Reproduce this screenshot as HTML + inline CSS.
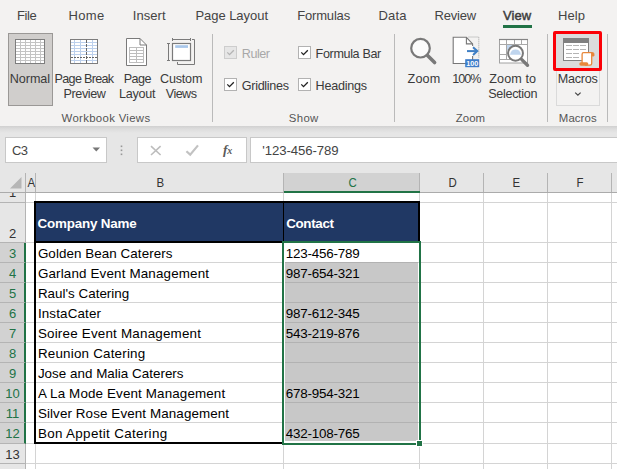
<!DOCTYPE html>
<html>
<head>
<meta charset="utf-8">
<title>Excel</title>
<style>
html,body{margin:0;padding:0;}
body{width:617px;height:469px;overflow:hidden;background:#fff;font-family:"Liberation Sans",sans-serif;color:#262626;position:relative;}
.abs{position:absolute;}
#ribbon{left:0;top:0;width:617px;height:126px;background:#f3f2f1;}
#shadow{left:0;top:126px;width:617px;height:7px;background:linear-gradient(#d0d0d0,#dcdcdc 40%,#e6e6e6);}
#fbar{left:0;top:133px;width:617px;height:42px;background:#e6e6e6;}
.t{position:absolute;white-space:nowrap;line-height:20px;height:20px;}
.tab{color:#444;}
.lbl{color:#3a3a3a;}
.grp{color:#555;}
.cbl{color:#3a3a3a;}
.sep{position:absolute;top:34px;width:1px;height:88px;background:#bababa;}
.cb{position:absolute;width:13px;height:13px;border:1px solid #b2b2b2;background:#fff;box-sizing:border-box;}
.cb.dis{border-color:#cdcdcd;background:#e6e6e6;}
.colh{position:absolute;top:173px;height:19px;border-right:1px solid #b4b4b4;box-sizing:border-box;}
.rowh{position:absolute;left:0;width:26px;background:#e6e6e6;border-bottom:1px solid #b4b4b4;border-right:1px solid #b4b4b4;box-sizing:border-box;overflow:hidden;}
.rowh.sel{background:#d2d2d2;border-right:2px solid #217346;}
.rowh span{position:absolute;left:0;width:25px;text-align:center;font-size:13px;line-height:20px;color:#333;}
.rowh.sel span{color:#217346;}
.vl{position:absolute;top:193px;width:1px;height:276px;background:#d4d4d4;}
.hl{position:absolute;left:26px;height:1px;width:591px;background:#d4d4d4;}
.cell{color:#000;}
.colt{transform:scaleX(0.88);}
.hd{color:#fff;font-weight:bold;}
svg{position:absolute;overflow:visible;}
</style>
</head>
<body>
<div id="ribbon" class="abs"></div>
<div id="shadow" class="abs"></div>
<div id="fbar" class="abs"></div>
<div class="abs" style="left:503px;top:25px;width:29px;height:3px;background:#217346"></div>
<div class="abs" style="left:8px;top:33px;width:45px;height:73px;background:#d0cecc;border:1px solid #9a9896;box-sizing:border-box"></div>
<!-- Normal icon -->
<svg width="30" height="25" viewBox="0 0 30 25" style="left:15px;top:39px" shape-rendering="crispEdges">
<rect x="0.5" y="0.5" width="29" height="24" fill="#fff" stroke="#7d7d7d"/>
<path d="M5.5 1V24M10.5 1V24M15.5 1V24M20.5 1V24M25.5 1V24M1 3.5H29M1 6.5H29M1 9.5H29M1 12.5H29M1 15.5H29M1 18.5H29M1 21.5H29" stroke="#c4c4c4" fill="none"/>
</svg>
<!-- Page Break Preview icon -->
<svg width="28" height="25" viewBox="0 0 28 25" style="left:70px;top:39px" shape-rendering="crispEdges">
<rect x="0.5" y="0.5" width="27" height="24" fill="#fff" stroke="#7d7d7d"/>
<path d="M4.5 1V24M10.5 1V24M22.5 1V24M1 3.5H27M1 6.5H27M1 9.5H27M1 12.5H27M1 15.5H27M1 21.5H27" stroke="#bcd0ec" fill="none"/>
<path d="M16.5 1V24" stroke="#666" stroke-dasharray="3 1" fill="none"/>
<path d="M1 18.5H27" stroke="#666" stroke-dasharray="2 1" fill="none"/>
</svg>
<!-- Page Layout icon -->
<svg width="22" height="29" viewBox="0 0 22 29" style="left:126px;top:38px">
<path d="M0.5 0.5H14L20.5 7V27.5H0.5Z" fill="#fff" stroke="#7a7a7a" stroke-width="1"/>
<path d="M14 0.5V7H20.5" fill="none" stroke="#7a7a7a" stroke-width="1"/>
<g shape-rendering="crispEdges"><rect x="3.5" y="9.5" width="14" height="15" fill="#fff" stroke="#bdbdbd"/>
<path d="M10.5 10V24M4 12.5H17M4 15.5H17M4 18.5H17M4 21.5H17" stroke="#bdbdbd" fill="none"/></g>
</svg>
<!-- Custom Views icon -->
<svg width="30" height="28" viewBox="0 0 30 28" style="left:166px;top:37px">
<g fill="none" stroke="#7a7a7a" stroke-width="1">
<path d="M26 2.5H28.5V27.5H11.5V25"/>
<path d="M6.2 2.5H24.8M6.5 1V4M24.5 1V4"/>
<path d="M2.5 6.2V23.8M1 6.5H4M1 23.5H4"/>
<rect x="6.5" y="6.5" width="18" height="17" fill="#fff" stroke-width="1.2"/>
</g>
<rect x="9.2" y="8.2" width="12.8" height="2.7" fill="#a9c7ea"/>
</svg>
<!-- Zoom icon -->
<svg width="30" height="30" viewBox="0 0 30 30" style="left:408px;top:36px">
<circle cx="12.5" cy="12.2" r="9.3" fill="#fbfbfb" stroke="#797979" stroke-width="2.2"/>
<path d="M19.3 19.3L26.6 26.6" stroke="#797979" stroke-width="3.6" stroke-linecap="round"/>
</svg>
<!-- 100% icon -->
<svg width="30" height="32" viewBox="0 0 30 32" style="left:452px;top:36px">
<path d="M1.2 1.3H14.4L20.6 7.9V27.5H1.2Z" fill="#fff" stroke="#777" stroke-width="1.1"/>
<path d="M14.4 1.3V7.9H20.6" fill="none" stroke="#777" stroke-width="1.1"/>
<path d="M16.5 1H26.8V21.5" fill="none" stroke="#999" stroke-width="0.9" stroke-dasharray="1 1"/>
<rect x="19.6" y="10" width="2" height="10" fill="#fff"/>
<path d="M15 15.1H25" stroke="#3f7fc4" stroke-width="2" fill="none"/>
<path d="M21 11.2L25.3 15.1L21 19" stroke="#3f7fc4" stroke-width="2" fill="none"/>
<rect x="13.2" y="23.2" width="14" height="8" fill="#3d7cc9"/>
<text x="20.2" y="30" text-anchor="middle" font-family="Liberation Sans, sans-serif" font-size="7.2" font-weight="bold" fill="#fff">100</text>
</svg>
<!-- Zoom to Selection icon -->
<svg width="32" height="30" viewBox="0 0 32 30" style="left:498px;top:38px">
<rect x="1.5" y="1.5" width="28" height="23.5" fill="#fff" stroke="#a2a2a2" stroke-width="1"/>
<path d="M1 1.5H30" stroke="#858585" stroke-width="1.2" fill="none"/>
<path d="M8.5 2V21M16.5 2V7M23.5 2V7M2 6.5H29M2 16.5H9M2 21.5H13" stroke="#a8a8a8" stroke-width="1" fill="none"/>
<rect x="9" y="7" width="7" height="5" fill="#bfd5ee"/>
<circle cx="17.5" cy="15.2" r="7.45" fill="#fff" stroke="#797979" stroke-width="2"/>
<path d="M12 16.8A5.6 6.6 0 0 1 23 16.8Z" fill="#bfd5ee"/>
<path d="M23.8 21.6L29.5 27.2" stroke="#797979" stroke-width="3.4" stroke-linecap="round"/>
</svg>

<div class="sep" style="left:212px"></div>
<div class="sep" style="left:394px"></div>
<div class="sep" style="left:547px"></div>
<div class="sep" style="left:607px"></div>
<div class="cb dis" style="left:224px;top:46px"><svg width="11" height="11" viewBox="0 0 11 11" style="left:0;top:0"><path d="M2.3 5.4 L4.5 7.6 L8.8 3.2" fill="none" stroke="#b4b4b4" stroke-width="1.3"/></svg></div>
<div class="cb" style="left:224px;top:78px"><svg width="11" height="11" viewBox="0 0 11 11" style="left:0;top:0"><path d="M2.3 5.4 L4.5 7.6 L8.8 3.2" fill="none" stroke="#222" stroke-width="1.3"/></svg></div>
<div class="cb" style="left:298px;top:46px"><svg width="11" height="11" viewBox="0 0 11 11" style="left:0;top:0"><path d="M2.3 5.4 L4.5 7.6 L8.8 3.2" fill="none" stroke="#222" stroke-width="1.3"/></svg></div>
<div class="cb" style="left:298px;top:78px"><svg width="11" height="11" viewBox="0 0 11 11" style="left:0;top:0"><path d="M2.3 5.4 L4.5 7.6 L8.8 3.2" fill="none" stroke="#222" stroke-width="1.3"/></svg></div>
<div class="abs" style="left:556px;top:68px;width:44px;height:38px;border:1px solid #dadada;box-sizing:border-box"></div>
<div class="abs" style="left:553px;top:31px;width:49px;height:40px;border:3px solid #fb0007;border-radius:2px;box-sizing:border-box;background:#dcdcdc"></div>
<div class="abs" style="left:5px;top:137px;width:102px;height:26px;background:#fff;border:1px solid #c8c8c8;box-sizing:border-box"></div>
<div class="abs" style="left:137px;top:137px;width:110px;height:26px;background:#fff;border:1px solid #c8c8c8;box-sizing:border-box"></div>
<div class="abs" style="left:250px;top:137px;width:370px;height:26px;background:#fff;border:1px solid #c8c8c8;box-sizing:border-box"></div>
<!-- Macros icon -->
<svg width="34" height="30" viewBox="0 0 34 30" style="left:562px;top:37px">
<g shape-rendering="crispEdges"><rect x="1.5" y="1.5" width="25" height="22" fill="#fff" stroke="#808080"/>
<rect x="1" y="1" width="26" height="5" fill="#808080"/>
<path d="M4 8.5H10M11 8.5H17M18 8.5H24M4 12.5H10M11 12.5H17M18 12.5H24M4 16.5H10M11 16.5H17M4 20.5H10M11 20.5H17" stroke="#b4b4b4" fill="none"/></g>
<path d="M29.6 15.6H30.6Q32 15.6 32 17V19H29.6Z" fill="#e8873a" stroke="#e8873a" stroke-width="0.8" stroke-linejoin="round"/>
<path d="M20.1 26V17.2Q20.1 15.7 21.6 15.7H29.7V26.4Q29.7 28.1 28 28.1H24Z" fill="#fff" stroke="#e8873a" stroke-width="1.3" stroke-linejoin="round"/>
<rect x="17.3" y="25.3" width="9" height="3.4" rx="1.7" fill="#e8873a"/>
</svg>
<!-- Macros chevron -->
<svg width="8" height="6" viewBox="0 0 8 6" style="left:574px;top:91px"><path d="M1.2 1.6L3.9 4.2L6.6 1.6" fill="none" stroke="#444" stroke-width="1.2"/></svg>
<!-- name box dropdown -->
<svg width="9" height="6" viewBox="0 0 9 6" style="left:92px;top:147px"><path d="M0.5 0.5H8L4.25 4.6Z" fill="#777"/></svg>
<!-- dots -->
<svg width="3" height="11" viewBox="0 0 3 11" style="left:120px;top:145px"><rect x="0.7" y="0.5" width="1.6" height="1.6" fill="#989898"/><rect x="0.7" y="4.5" width="1.6" height="1.6" fill="#989898"/><rect x="0.7" y="8.5" width="1.6" height="1.6" fill="#989898"/></svg>
<!-- cancel -->
<svg width="12" height="12" viewBox="0 0 12 12" style="left:150px;top:145px"><path d="M1 1.2L10.6 10M10.6 1.2L1 10" stroke="#bdbdbd" stroke-width="1.6" fill="none"/></svg>
<!-- enter -->
<svg width="14" height="12" viewBox="0 0 14 12" style="left:185px;top:144px"><path d="M1.4 7.2L5.2 10.6L13 1.4" stroke="#c2c2c2" stroke-width="2.2" fill="none"/></svg>
<!-- fx -->
<div class="abs" style="left:223px;top:140.5px;font-family:'Liberation Serif',serif;font-style:italic;font-weight:bold;font-size:13.5px;line-height:18px;color:#5a5a5a;letter-spacing:0px">f<span style="font-size:10px;position:relative;top:0.5px;left:-0.3px">x</span></div>

<div class="abs" style="left:0;top:173px;width:617px;height:20px;background:#e6e6e6;border-bottom:1px solid #ababab;box-sizing:border-box"></div>
<div class="colh" style="left:0px;width:26px"></div>
<div class="colh" style="left:26px;width:10px"></div>
<div class="colh" style="left:36px;width:248px"></div>
<div class="colh" style="left:420px;width:64px"></div>
<div class="colh" style="left:484px;width:64px"></div>
<div class="colh" style="left:548px;width:64px"></div>
<div class="abs" style="left:284px;top:173px;width:136px;height:18px;background:#d2d2d2"></div>
<div class="abs" style="left:284px;top:191px;width:136px;height:2px;background:#217346"></div>
<div class="abs" style="left:419px;top:173px;width:1px;height:18px;background:#b4b4b4"></div>
<svg width="16" height="14" style="left:7px;top:176px"><path d="M14.5 1 V12.5 H3 Z" fill="#b6b6b6"/></svg>
<div class="vl" style="left:35px"></div>
<div class="vl" style="left:283px"></div>
<div class="vl" style="left:419px"></div>
<div class="vl" style="left:483px"></div>
<div class="vl" style="left:547px"></div>
<div class="vl" style="left:611px"></div>
<div class="hl" style="top:202px"></div>
<div class="hl" style="top:242px"></div>
<div class="hl" style="top:262px"></div>
<div class="hl" style="top:282px"></div>
<div class="hl" style="top:302px"></div>
<div class="hl" style="top:322px"></div>
<div class="hl" style="top:342px"></div>
<div class="hl" style="top:362px"></div>
<div class="hl" style="top:382px"></div>
<div class="hl" style="top:402px"></div>
<div class="hl" style="top:422px"></div>
<div class="hl" style="top:443px"></div>
<div class="hl" style="top:463px"></div>
<div class="rowh" style="top:193px;height:10px"><span style="bottom:-1px">1</span></div>
<div class="rowh" style="top:203px;height:40px"><span style="bottom:-2px">2</span></div>
<div class="rowh sel" style="top:243px;height:20px"><span style="bottom:-2px">3</span></div>
<div class="rowh sel" style="top:263px;height:20px"><span style="bottom:-2px">4</span></div>
<div class="rowh sel" style="top:283px;height:20px"><span style="bottom:-2px">5</span></div>
<div class="rowh sel" style="top:303px;height:20px"><span style="bottom:-2px">6</span></div>
<div class="rowh sel" style="top:323px;height:20px"><span style="bottom:-2px">7</span></div>
<div class="rowh sel" style="top:343px;height:20px"><span style="bottom:-2px">8</span></div>
<div class="rowh sel" style="top:363px;height:20px"><span style="bottom:-2px">9</span></div>
<div class="rowh sel" style="top:383px;height:20px"><span style="bottom:-2px">10</span></div>
<div class="rowh sel" style="top:403px;height:20px"><span style="bottom:-2px">11</span></div>
<div class="rowh sel" style="top:423px;height:21px"><span style="bottom:-1px">12</span></div>
<div class="rowh" style="top:444px;height:20px"><span style="bottom:-2px">13</span></div>
<div class="rowh" style="top:464px;height:20px"><span style="bottom:-2px">14</span></div>
<div class="abs" style="left:34px;top:201px;width:386px;height:42px;background:#000"></div>
<div class="abs" style="left:36px;top:203px;width:247px;height:38px;background:#203864"></div>
<div class="abs" style="left:284px;top:203px;width:134px;height:38px;background:#203864"></div>
<div class="abs" style="left:34px;top:243px;width:2px;height:201px;background:#000"></div>
<div class="abs" style="left:34px;top:442px;width:249px;height:2px;background:#000"></div>
<div class="abs" style="left:283px;top:243px;width:1px;height:199px;background:#000"></div>
<div class="abs" style="left:284px;top:243px;width:1px;height:199px;background:#fff"></div>
<div class="abs" style="left:285px;top:262px;width:133px;height:180px;background:#c8c8c8"></div>
<div class="abs" style="left:285px;top:262px;width:133px;height:1px;background:#b2b2b2"></div>
<div class="abs" style="left:285px;top:282px;width:133px;height:1px;background:#b2b2b2"></div>
<div class="abs" style="left:285px;top:302px;width:133px;height:1px;background:#b2b2b2"></div>
<div class="abs" style="left:285px;top:322px;width:133px;height:1px;background:#b2b2b2"></div>
<div class="abs" style="left:285px;top:342px;width:133px;height:1px;background:#b2b2b2"></div>
<div class="abs" style="left:285px;top:362px;width:133px;height:1px;background:#b2b2b2"></div>
<div class="abs" style="left:285px;top:382px;width:133px;height:1px;background:#b2b2b2"></div>
<div class="abs" style="left:285px;top:402px;width:133px;height:1px;background:#b2b2b2"></div>
<div class="abs" style="left:285px;top:422px;width:133px;height:1px;background:#b2b2b2"></div>
<div class="abs" style="left:284px;top:441px;width:135px;height:2px;background:#fff"></div>
<div class="abs" style="left:282px;top:241px;width:139px;height:204px;border:2px solid #217346;box-sizing:border-box"></div>
<div class="abs" style="left:416px;top:440px;width:7px;height:7px;background:#fff"></div>
<div class="abs" style="left:417px;top:441px;width:5px;height:5px;background:#217346"></div>
<div class="t tab" id="t0" style="left:17.00px;top:5.50px;font-size:13px;letter-spacing:-0.388px;">File</div>
<div class="t tab" id="t1" style="left:68.40px;top:5.50px;font-size:13px;letter-spacing:0.353px;">Home</div>
<div class="t tab" id="t2" style="left:132.70px;top:5.50px;font-size:13px;letter-spacing:0.081px;">Insert</div>
<div class="t tab" id="t3" style="left:195.40px;top:5.50px;font-size:13px;letter-spacing:-0.038px;">Page Layout</div>
<div class="t tab" id="t4" style="left:297.20px;top:5.50px;font-size:13px;letter-spacing:-0.173px;">Formulas</div>
<div class="t tab" id="t5" style="left:378.50px;top:5.50px;font-size:13px;letter-spacing:0.183px;">Data</div>
<div class="t tab" id="t6" style="left:434.60px;top:5.50px;font-size:13px;letter-spacing:-0.204px;">Review</div>
<div class="t tab" id="t7" style="left:502.90px;top:5.50px;font-size:13px;letter-spacing:0.112px;-webkit-text-stroke:0.45px #3c3c3c;color:#3c3c3c;">View</div>
<div class="t tab" id="t8" style="left:557.90px;top:5.50px;font-size:13px;letter-spacing:0.112px;">Help</div>
<div class="t lbl" id="t9" style="left:9.80px;top:68.63px;font-size:12.6px;letter-spacing:-0.066px;">Normal</div>
<div class="t lbl" id="t10" style="left:54.60px;top:68.63px;font-size:12.6px;letter-spacing:-0.701px;">Page Break</div>
<div class="t lbl" id="t11" style="left:63.60px;top:84.13px;font-size:12.6px;letter-spacing:-0.428px;">Preview</div>
<div class="t lbl" id="t12" style="left:123.80px;top:68.63px;font-size:12.6px;letter-spacing:-0.580px;">Page</div>
<div class="t lbl" id="t13" style="left:118.90px;top:84.13px;font-size:12.6px;letter-spacing:-0.219px;">Layout</div>
<div class="t lbl" id="t14" style="left:160.00px;top:68.63px;font-size:12.6px;letter-spacing:-0.198px;">Custom</div>
<div class="t lbl" id="t15" style="left:165.80px;top:84.13px;font-size:12.6px;letter-spacing:-0.555px;">Views</div>
<div class="t lbl" id="t16" style="left:407.50px;top:68.63px;font-size:12.6px;letter-spacing:0.199px;">Zoom</div>
<div class="t lbl" id="t17" style="left:452.30px;top:68.63px;font-size:12.6px;letter-spacing:-0.980px;">100%</div>
<div class="t lbl" id="t18" style="left:489.30px;top:68.63px;font-size:12.6px;letter-spacing:0.100px;">Zoom to</div>
<div class="t lbl" id="t19" style="left:488.30px;top:84.13px;font-size:12.6px;letter-spacing:-0.335px;">Selection</div>
<div class="t lbl" id="t20" style="left:557.70px;top:68.63px;font-size:12.6px;letter-spacing:-0.233px;">Macros</div>
<div class="t grp" id="t21" style="left:61.60px;top:108.45px;font-size:11.4px;letter-spacing:0.313px;">Workbook Views</div>
<div class="t grp" id="t22" style="left:288.80px;top:108.45px;font-size:11.4px;letter-spacing:0.350px;">Show</div>
<div class="t grp" id="t23" style="left:455.70px;top:108.45px;font-size:11.4px;letter-spacing:0.094px;">Zoom</div>
<div class="t grp" id="t24" style="left:558.80px;top:108.45px;font-size:11.4px;letter-spacing:0.093px;">Macros</div>
<div class="t cbl" id="t25" style="left:241.80px;top:43.63px;font-size:12.6px;letter-spacing:-0.482px;color:#a8a8a8;">Ruler</div>
<div class="t cbl" id="t26" style="left:241.80px;top:75.83px;font-size:12.6px;letter-spacing:-0.311px;">Gridlines</div>
<div class="t cbl" id="t27" style="left:315.60px;top:43.63px;font-size:12.6px;letter-spacing:-0.363px;">Formula Bar</div>
<div class="t cbl" id="t28" style="left:315.60px;top:75.83px;font-size:12.6px;letter-spacing:-0.265px;">Headings</div>
<div class="t fx" id="t29" style="left:11.90px;top:140.50px;font-size:13px;letter-spacing:-0.512px;color:#444;">C3</div>
<div class="t fx" id="t30" style="left:262.30px;top:141.43px;font-size:13.2px;letter-spacing:-0.093px;color:#444;">'123-456-789</div>
<div class="t colt" id="t31" style="left:26.78px;top:172.80px;font-size:13px;letter-spacing:0.000px;color:#333;">A</div>
<div class="t colt" id="t32" style="left:155.98px;top:172.80px;font-size:13px;letter-spacing:0.000px;color:#333;">B</div>
<div class="t colt" id="t33" style="left:347.67px;top:172.80px;font-size:13px;letter-spacing:0.000px;color:#217346;">C</div>
<div class="t colt" id="t34" style="left:447.67px;top:172.80px;font-size:13px;letter-spacing:0.000px;color:#333;">D</div>
<div class="t colt" id="t35" style="left:511.98px;top:172.80px;font-size:13px;letter-spacing:0.000px;color:#333;">E</div>
<div class="t colt" id="t36" style="left:576.30px;top:172.80px;font-size:13px;letter-spacing:0.000px;color:#333;">F</div>
<div class="t cell hd" id="t37" style="left:37.60px;top:214.36px;font-size:13.4px;letter-spacing:-0.184px;">Company Name</div>
<div class="t cell hd" id="t38" style="left:286.20px;top:214.36px;font-size:13.4px;letter-spacing:-0.335px;">Contact</div>
<div class="t cell" id="t39" style="left:37.90px;top:243.96px;font-size:13.4px;letter-spacing:0.068px;">Golden Bean Caterers</div>
<div class="t cell" id="t40" style="left:285.70px;top:243.96px;font-size:13.4px;letter-spacing:-0.187px;">123-456-789</div>
<div class="t cell" id="t41" style="left:37.90px;top:263.96px;font-size:13.4px;letter-spacing:0.159px;">Garland Event Management</div>
<div class="t cell" id="t42" style="left:285.70px;top:263.96px;font-size:13.4px;letter-spacing:-0.187px;">987-654-321</div>
<div class="t cell" id="t43" style="left:37.90px;top:283.96px;font-size:13.4px;letter-spacing:0.017px;">Raul's Catering</div>
<div class="t cell" id="t44" style="left:37.90px;top:303.96px;font-size:13.4px;letter-spacing:0.152px;">InstaCater</div>
<div class="t cell" id="t45" style="left:285.70px;top:303.96px;font-size:13.4px;letter-spacing:-0.187px;">987-612-345</div>
<div class="t cell" id="t46" style="left:37.90px;top:323.96px;font-size:13.4px;letter-spacing:0.206px;">Soiree Event Management</div>
<div class="t cell" id="t47" style="left:285.70px;top:323.96px;font-size:13.4px;letter-spacing:-0.187px;">543-219-876</div>
<div class="t cell" id="t48" style="left:37.90px;top:343.96px;font-size:13.4px;letter-spacing:0.205px;">Reunion Catering</div>
<div class="t cell" id="t49" style="left:37.90px;top:363.96px;font-size:13.4px;letter-spacing:0.024px;">Jose and Malia Caterers</div>
<div class="t cell" id="t50" style="left:37.90px;top:383.96px;font-size:13.4px;letter-spacing:0.136px;">A La Mode Event Management</div>
<div class="t cell" id="t51" style="left:285.70px;top:383.96px;font-size:13.4px;letter-spacing:-0.187px;">678-954-321</div>
<div class="t cell" id="t52" style="left:37.90px;top:403.96px;font-size:13.4px;letter-spacing:0.107px;">Silver Rose Event Management</div>
<div class="t cell" id="t53" style="left:37.90px;top:423.96px;font-size:13.4px;letter-spacing:0.338px;">Bon Appetit Catering</div>
<div class="t cell" id="t54" style="left:285.70px;top:423.96px;font-size:13.4px;letter-spacing:-0.187px;">432-108-765</div>
</body>
</html>
